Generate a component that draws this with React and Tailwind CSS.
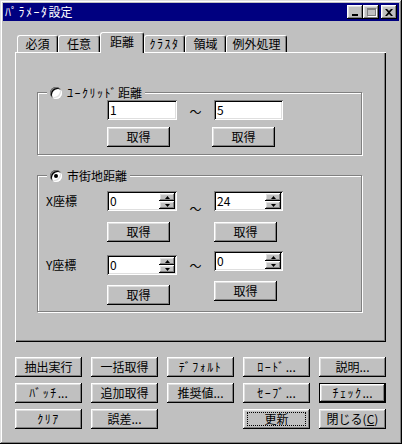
import React from 'react';

const raised =
  'shadow-[inset_-1px_-1px_#000,inset_1px_1px_#fff,inset_-2px_-2px_#808080,inset_2px_2px_#dfdfdf]';
const sunken =
  'shadow-[inset_1px_1px_#808080,inset_-1px_-1px_#fff,inset_2px_2px_#000,inset_-2px_-2px_#dfdfdf]';

// half-width katakana comes out narrow in Noto, widen those runs a bit
function K({ children }) {
  if (typeof children !== 'string') return children;
  const parts = children.split(/([\uFF61-\uFF9F]+)/);
  return parts.map((p, i) =>
    /[\uFF61-\uFF9F]/.test(p) ? (
      <span key={i} className="tracking-[1.5px]">
        {p}
      </span>
    ) : (
      <React.Fragment key={i}>{p}</React.Fragment>
    )
  );
}

function Btn({ children, className = '', focus = false }) {
  return (
    <button
      className={`flex items-center justify-center h-[20px] bg-[#c0c0c0] text-[12px] leading-none text-black ${raised} ${className}`}
    >
      {focus ? (
        <span className="flex items-center justify-center w-[calc(100%-8px)] h-[14px] border border-dotted border-black">
          <K>{children}</K>
        </span>
      ) : (
        <K>{children}</K>
      )}
    </button>
  );
}

function Edit({ value, className = '' }) {
  return (
    <div className={`flex items-center h-[20px] bg-white pl-[3px] text-[12px] leading-none ${sunken} ${className}`}>
      {value}
    </div>
  );
}

function Arrow({ up }) {
  return (
    <svg width="5" height="3" viewBox="0 0 5 3">
      <path d={up ? 'M2.5 0 L5 3 L0 3 Z' : 'M0 0 L5 0 L2.5 3 Z'} fill="#000" />
    </svg>
  );
}

function Spin({ value, className = '' }) {
  return (
    <div className={`flex items-center justify-between h-[20px] bg-white pl-[3px] text-[12px] leading-none ${sunken} ${className}`}>
      <span>{value}</span>
      <div className="flex flex-col mr-[2px] w-[16px] h-[16px]">
        <div className={`flex-1 flex items-center justify-center bg-[#c0c0c0] ${raised}`}>
          <Arrow up />
        </div>
        <div className={`flex-1 flex items-center justify-center bg-[#c0c0c0] ${raised}`}>
          <Arrow />
        </div>
      </div>
    </div>
  );
}

function Radio({ checked }) {
  return (
    <div className="w-[12px] h-[12px] rounded-full bg-white flex items-center justify-center shadow-[inset_1px_1px_#808080,inset_-1px_-1px_#fff,inset_2px_2px_#000,inset_-2px_-2px_#dfdfdf]">
      {checked && <div className="w-[4px] h-[4px] rounded-full bg-black" />}
    </div>
  );
}

function Group({ label, checked, children, className = '' }) {
  return (
    <div className={`relative w-[325px] border border-[#808080] shadow-[1px_1px_0_#fff,inset_1px_1px_0_#fff] ${className}`}>
      <div className="absolute left-[9px] top-[-7px] flex items-center gap-[5px] bg-[#c0c0c0] px-[3px] h-[14px] text-[12px] leading-none">
        <Radio checked={checked} />
        <span>
          <K>{label}</K>
        </span>
      </div>
      {children}
    </div>
  );
}

function Tilde({ className = '' }) {
  return <div className={`w-[37px] flex justify-center text-[12px] leading-none ${className}`}>～</div>;
}

const tabs = [
  { label: '必須', w: 'w-[41px]' },
  { label: '任意', w: 'w-[42px]' },
  { label: '距離', w: 'w-[44px]', active: true },
  { label: 'ｸﾗｽﾀ', w: 'w-[41px]' },
  { label: '領域', w: 'w-[41px]' },
  { label: '例外処理', w: 'w-[61px]' },
];

const bottom = [
  ['抽出実行', '一括取得', 'ﾃﾞﾌｫﾙﾄ', 'ﾛｰﾄﾞ...', '説明...'],
  ['ﾊﾞｯﾁ...', '追加取得', '推奨値...', 'ｾｰﾌﾞ...', 'ﾁｪｯｸ...'],
  ['ｸﾘｱ', '誤差...', null, '更新', '閉じる(C)'],
];

export default function App() {
  return (
    <div className="w-[402px] h-[444px] bg-[#c0c0c0] p-[3px] text-black font-[family-name:'Noto_Sans_CJK_JP','Noto_Sans',sans-serif] shadow-[inset_-1px_-1px_#000,inset_1px_1px_#dfdfdf,inset_-2px_-2px_#808080,inset_2px_2px_#fff]">
      {/* title bar */}
      <div className="flex items-center justify-between h-[18px] bg-[#000080] pl-[2px] pr-[2px]">
        <span className="text-white text-[12px] leading-none">
          <K>ﾊﾟﾗﾒｰﾀ設定</K>
        </span>
        <div className="flex items-center">
          <div className={`w-[16px] h-[14px] bg-[#c0c0c0] flex items-end justify-center pb-[3px] ${raised}`}>
            <div className="w-[6px] h-[2px] bg-black" />
          </div>
          <div className={`w-[16px] h-[14px] bg-[#c0c0c0] flex items-center justify-center ${raised}`}>
            <div className="w-[9px] h-[8px] border border-[#808080] border-t-2 shadow-[1px_1px_0_#fff]" />
          </div>
          <div className={`w-[16px] h-[14px] ml-[2px] bg-[#c0c0c0] flex items-center justify-center ${raised}`}>
            <svg width="8" height="7" viewBox="0 0 8 7">
              <path d="M0 0h2l2 2 2-2h2L5 3.5 8 7H6L4 5 2 7H0l3-3.5z" fill="#000" />
            </svg>
          </div>
        </div>
      </div>

      <div className="px-[12px] mt-[11px]">
        {/* tabs */}
        <div className="flex items-end h-[20px] pl-[2px]">
          {tabs.map((t) =>
            t.active ? (
              <div
                key={t.label}
                className={`${t.w} relative z-10 h-[21px] mb-[-1px] bg-[#c0c0c0] border-l border-t border-white rounded-t-[3px] border-r border-r-black shadow-[inset_-1px_0_#808080] flex justify-center pt-[3px] text-[12px] leading-none`}
              >
                {t.label}
              </div>
            ) : (
              <div
                key={t.label}
                className={`${t.w} h-[17px] bg-[#c0c0c0] border-l border-t border-white rounded-t-[3px] border-r border-r-black shadow-[inset_-1px_0_#808080] flex justify-center pt-[2px] text-[12px] leading-none`}
              >
                <K>{t.label}</K>
              </div>
            )
          )}
        </div>

        {/* panel */}
        <div className="w-[371px] h-[290px] border-l border-t border-white shadow-[inset_-1px_-1px_#000,inset_-2px_-2px_#808080] pt-[39px] pl-[21px]">
          <Group label="ﾕｰｸﾘｯﾄﾞ距離" className="h-[63px]">
            <div className="flex pl-[69px] pt-[7px]">
              <Edit value="1" className="w-[70px]" />
              <Tilde className="pt-[6px]" />
              <Edit value="5" className="w-[69px]" />
            </div>
            <div className="flex pl-[69px] mt-[7px]">
              <Btn className="w-[63px]">取得</Btn>
              <div className="w-[42px]" />
              <Btn className="w-[63px]">取得</Btn>
            </div>
          </Group>

          <Group label="市街地距離" checked className="h-[137px] mt-[20px]">
            <div className="flex items-start pt-[15px]">
              <div className="w-[69px] pl-[8px] pt-[4px] text-[12px] leading-none">X座標</div>
              <div className="flex flex-col gap-[11px]">
                <Spin value="0" className="w-[70px]" />
                <Btn className="w-[63px]">取得</Btn>
              </div>
              <Tilde className="pt-[12px]" />
              <div className="flex flex-col gap-[11px]">
                <Spin value="24" className="w-[69px]" />
                <Btn className="w-[63px]">取得</Btn>
              </div>
            </div>
            <div className="flex items-start mt-[9px]">
              <div className="w-[69px] pl-[8px] pt-[8px] text-[12px] leading-none">Y座標</div>
              <div className="flex flex-col gap-[10px] pt-[4px]">
                <Spin value="0" className="w-[70px]" />
                <Btn className="w-[63px]">取得</Btn>
              </div>
              <Tilde className="pt-[9px]" />
              <div className="flex flex-col gap-[10px]">
                <Spin value="0" className="w-[69px]" />
                <Btn className="w-[63px]">取得</Btn>
              </div>
            </div>
          </Group>
        </div>

        {/* bottom buttons */}
        <div className="grid grid-cols-[67px_67px_67px_67px_67px] gap-x-[9px] gap-y-[6px] mt-[15px] pr-[2px]">
          {bottom.flat().map((b, i) =>
            b === null ? (
              <div key={i} />
            ) : b === 'ﾁｪｯｸ...' ? (
              <button
                key={i}
                className="flex items-center justify-center h-[20px] bg-[#c0c0c0] text-[12px] leading-none border border-black shadow-[inset_-1px_-1px_#000,inset_1px_1px_#fff,inset_-2px_-2px_#808080,inset_2px_2px_#dfdfdf]"
              >
                <K>{b}</K>
              </button>
            ) : b === '閉じる(C)' ? (
              <Btn key={i}>
                <span>
                  閉じる(<span className="underline">C</span>)
                </span>
              </Btn>
            ) : (
              <Btn key={i} focus={b === '更新'}>
                {b}
              </Btn>
            )
          )}
        </div>
      </div>
    </div>
  );
}
